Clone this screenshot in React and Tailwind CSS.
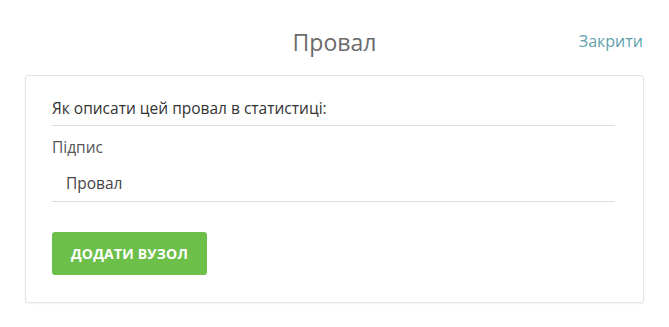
export default function App() {
  return (
    <div className="w-[669px] h-[327px] bg-white" style={{ fontFamily: "'Open Sans', Lato, sans-serif" }}>
      <div className="relative h-[75px] flex items-center justify-center">
        <div className="text-[23px] text-[#6b6b6b] leading-none pt-[10px]">Провал</div>
        <div className="absolute right-[26px] top-[33px] text-[16px] text-[#5f9fad] leading-none">Закрити</div>
      </div>
      <div className="mx-[25px] w-[619px] h-[228px] border border-[#e4e4e4] rounded-[3px] shadow-[0_1px_2px_rgba(0,0,0,0.06)] pl-[26px] pr-[28px] pt-[22px]">
        <div className="text-[15.5px] text-[#333] leading-none h-[28px] border-b border-[#dedede] pt-[3px]">Як описати цей провал в статистиці:</div>
        <div className="text-[15.5px] text-[#555] leading-none pt-[14px]">Підпис</div>
        <div className="text-[15.5px] text-[#444] leading-none pl-[14px] pt-[20px] h-[46px] border-b border-[#dedede]">Провал</div>
        <button className="mt-[30px] w-[155px] h-[43px] bg-[#6cc04a] rounded-[3px] text-white font-bold text-[14px] tracking-[0.2px]" style={{ fontFamily: "'Open Sans', sans-serif" }}>ДОДАТИ ВУЗОЛ</button>
      </div>
    </div>
  );
}
